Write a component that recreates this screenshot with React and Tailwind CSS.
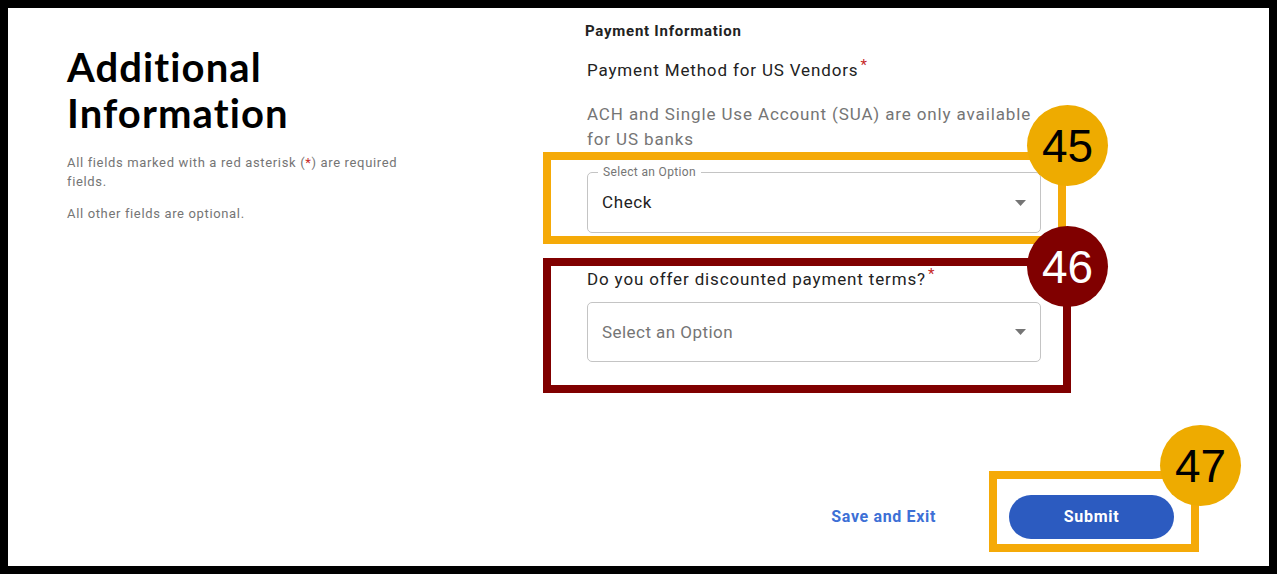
import { useState } from 'react';

const GOLD = 'border-[#f5aa08]';

function Caret() {
  return (
    <svg width="11" height="6" viewBox="0 0 11 6" className="shrink-0">
      <path d="M0 0 L11 0 L5.5 6 Z" fill="#757575" />
    </svg>
  );
}

function Badge({ n, className }) {
  return (
    <div
      className={`absolute w-[81px] h-[81px] rounded-full flex items-center justify-center text-[46px] leading-none font-['Liberation_Sans',Arial,sans-serif] ${className}`}
    >
      {n}
    </div>
  );
}

export default function App() {
  const [method] = useState('Check');

  return (
    <div className="relative w-[1277px] h-[574px] bg-black p-[8px] font-['Roboto','Noto_Sans',sans-serif] overflow-hidden">
      <div className="w-full h-full bg-white flex">
        {/* Left intro column */}
        <div className="w-[577px] shrink-0 pl-[59px] pt-[36px]">
          <h1 className="text-[40px] leading-[46px] font-bold text-black font-['Lato','Noto_Sans',sans-serif] tracking-[1.1px]">
            Additional
            <br />
            Information
          </h1>
          <p className="mt-[17px] w-[345px] text-[13px] leading-[19px] text-[#757575] tracking-[0.65px]">
            All fields marked with a red asterisk (<span className="text-[#c62828]">*</span>) are required fields.
          </p>
          <p className="mt-[13px] text-[13px] leading-[19px] text-[#757575] tracking-[0.65px]">
            All other fields are optional.
          </p>
        </div>

        {/* Right form column */}
        <div className="flex-1 flex flex-col pt-[13px] pr-[95px]">
          <h2 className="text-[15px] leading-[20px] font-bold text-[#222] tracking-[0.75px]">Payment Information</h2>

          <div className="ml-[2px] w-[454px]">
            <label className="block mt-[17px] text-[17px] leading-[24px] text-[#222] tracking-[0.85px]">
              Payment Method for US Vendors<span className="text-[#c62828] align-top text-[15px] leading-[15px] ml-[2px]">*</span>
            </label>
            <p className="mt-[20px] text-[17px] leading-[25px] text-[#757575] tracking-[0.87px]">
              ACH and Single Use Account (SUA) are only available for US banks
            </p>

            <div className="relative mt-[20px] h-[61px] border border-[#c4c4c4] rounded-[5px] flex items-center justify-between pl-[14px] pr-[14px]">
              <span className="absolute -top-[8px] left-[10px] px-[5px] bg-white text-[12px] leading-[14px] text-[#757575] tracking-[0.35px]">
                Select an Option
              </span>
              <span className="text-[17px] text-[#222] mt-[1px] tracking-[0.6px]">{method}</span>
              <Caret />
            </div>

            <label className="block mt-[34px] text-[17px] leading-[24px] text-[#222] tracking-[0.85px]">
              Do you offer discounted payment terms?<span className="text-[#c62828] align-top text-[15px] leading-[15px] ml-[2px]">*</span>
            </label>
            <div className="mt-[11px] h-[60px] border border-[#c4c4c4] rounded-[5px] flex items-center justify-between pl-[14px] pr-[14px]">
              <span className="text-[17px] text-[#757575] mt-[2px] tracking-[0.45px]">Select an Option</span>
              <Caret />
            </div>
          </div>

          <div className="mt-auto mb-[27px] flex items-center justify-end gap-[73px]">
            <button className="text-[16px] font-bold text-[#3d70d6] tracking-[0.65px]">Save and Exit</button>
            <button className="w-[165px] h-[44px] rounded-full bg-[#2c5bc0] text-white text-[16px] font-bold tracking-[0.7px]">
              Submit
            </button>
          </div>
        </div>
      </div>

      {/* Annotation overlays */}
      <div className={`absolute left-[543px] top-[152px] w-[523px] h-[92px] border-[8px] ${GOLD}`} />
      <div className="absolute left-[543px] top-[258px] w-[528px] h-[135px] border-[8px] border-[#800000]" />
      <div className={`absolute left-[989px] top-[471px] w-[210px] h-[81px] border-[8px] ${GOLD}`} />

      <Badge n="45" className="left-[1027px] top-[105px] bg-[#eeab00] text-black" />
      <Badge n="46" className="left-[1027px] top-[226px] bg-[#800000] text-white" />
      <Badge n="47" className="left-[1160px] top-[425px] bg-[#eeab00] text-black" />
    </div>
  );
}
